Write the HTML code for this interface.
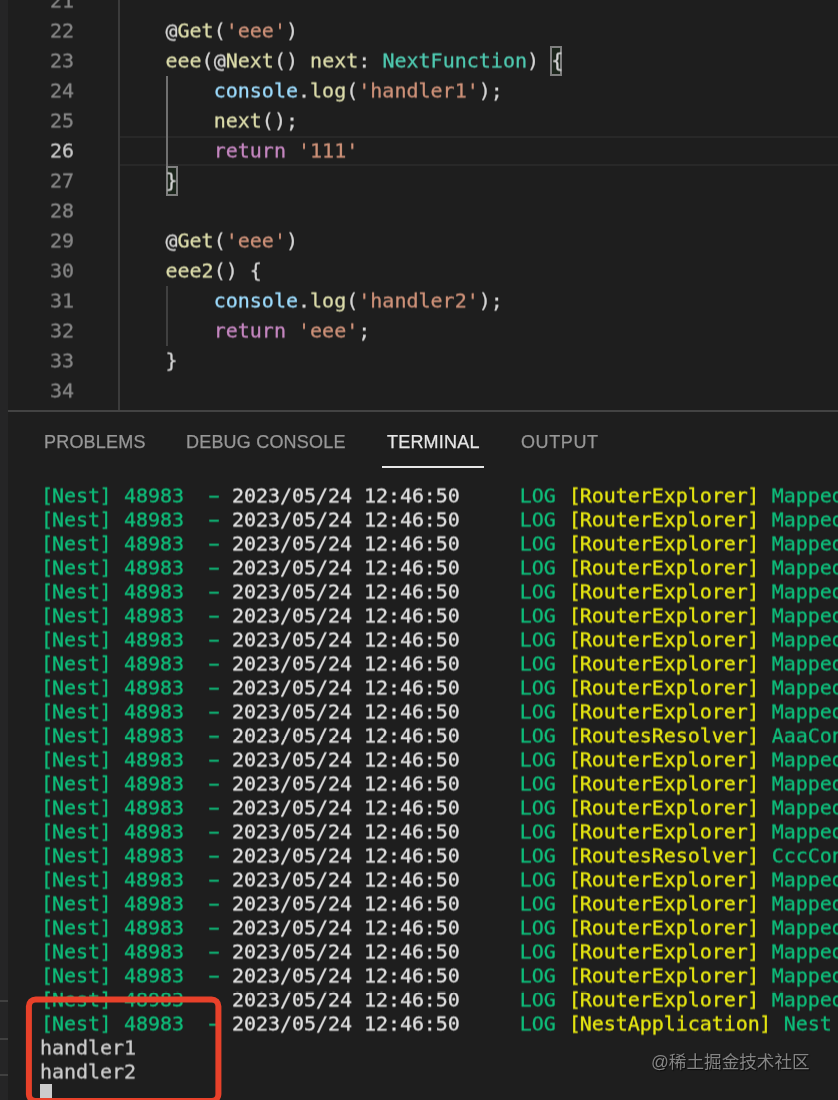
<!DOCTYPE html>
<html lang="zh">
<head>
<meta charset="utf-8">
<title>VS Code</title>
<style>
html,body{margin:0;padding:0;}
.n,.c,#term,#tabs div,#wm{will-change:transform;}
.n,.c,#term{-webkit-text-stroke:0.3px currentColor;}
body{width:838px;height:1100px;overflow:hidden;background:#1e1e1e;position:relative;font-family:"DejaVu Sans Mono","Liberation Mono",monospace;}
#side{position:absolute;left:0;top:0;width:8px;height:1100px;background:#252526;}
#side i{position:absolute;left:0;width:8px;height:2px;background:#404040;}
#gl{position:absolute;left:118px;top:0;width:2px;height:410px;background:#3b3b3b;}
#hb{position:absolute;left:8px;top:410px;width:830px;height:2px;background:#434343;}
.n{position:absolute;left:30px;width:44px;text-align:right;font-size:20px;line-height:30px;height:30px;color:#858585;}
.n.cur{color:#c6c6c6;}
#term,.n,.c{transform:translateY(-0.5px) rotate(0.0001deg);transform-origin:0 0;}
.c{position:absolute;left:69px;letter-spacing:0.01px;white-space:pre;font-size:20px;line-height:30px;height:30px;color:#d4d4d4;}
.f{color:#dcdcaa} .s{color:#ce9178} .v{color:#9cdcfe} .k{color:#c586c0} .t{color:#4ec9b0} .w2{color:#d4d4d4}
.bmb{position:absolute;width:12px;height:30px;box-sizing:border-box;border:2px solid #7f7f7f;background:#1b251b;}
#cl{position:absolute;left:120px;top:136px;width:718px;height:30px;box-sizing:border-box;border-top:2px solid #282828;border-bottom:2px solid #282828;}
.ig{position:absolute;width:2px;}
#tabs div{position:absolute;top:430px;font-family:"Liberation Sans",sans-serif;font-size:18px;line-height:24px;color:#979797;white-space:nowrap;letter-spacing:0.2px;-webkit-text-stroke:0.25px currentColor;}
#tabs #ul{top:466px;left:382px;width:102px;height:2px;background:#e7e7e7;}
#term{position:absolute;left:39.5px;top:484px;font-size:20px;color:#cccccc;letter-spacing:-0.046px;}
.r{height:24px;line-height:24px;white-space:pre;}
.lb,.rb{font-weight:normal;position:relative;left:1px;}
.rb{left:-0.5px;}
.d{display:inline-block;transform:scaleX(1.75);}
.g{color:#0dbc79} .w{color:#e0e0e0} .y{color:#e5e510}
#cur{position:absolute;left:40px;top:1084px;width:12px;height:16px;background:#cccccc;}
#red{position:absolute;left:0;top:0;}
#wm{position:absolute;left:651px;top:1050px;font-family:"Liberation Sans","Noto Sans CJK SC",sans-serif;font-size:17.6px;line-height:24px;color:#848484;white-space:nowrap;text-shadow:1px 1px 1px rgba(0,0,0,0.7);}
</style>
</head>
<body>
<div id="side"><i style="top:1000px"></i><i style="top:1038px"></i><i style="top:1074px"></i></div>
<div id="gl"></div>
<div id="cl"></div>
<div class="bmb" style="left:550px;top:46px"></div>
<div class="bmb" style="left:166px;top:166px"></div>
<div class="ig" style="left:166px;top:76px;height:90px;background:#707070"></div>
<div class="ig" style="left:166px;top:286px;height:60px;background:#404040"></div>
<div class="n" style="top:-14px">21</div>
<div class="n" style="top:16px">22</div>
<div class="n" style="top:46px">23</div>
<div class="n" style="top:76px">24</div>
<div class="n" style="top:106px">25</div>
<div class="n cur" style="top:136px">26</div>
<div class="n" style="top:166px">27</div>
<div class="n" style="top:196px">28</div>
<div class="n" style="top:226px">29</div>
<div class="n" style="top:256px">30</div>
<div class="n" style="top:286px">31</div>
<div class="n" style="top:316px">32</div>
<div class="n" style="top:346px">33</div>
<div class="n" style="top:376px">34</div>
<div class="c" style="top:-14px"></div>
<div class="c" style="top:16px">        <span class="w2">@</span><span class="f">Get</span>(<span class="s">'eee'</span>)</div>
<div class="c" style="top:46px">        <span class="f">eee</span>(<span class="w2">@</span><span class="f">Next</span>() <span class="f">next</span>: <span class="t">NextFunction</span>) {</div>
<div class="c" style="top:76px">            <span class="v">console</span>.<span class="f">log</span>(<span class="s">'handler1'</span>);</div>
<div class="c" style="top:106px">            <span class="f">next</span>();</div>
<div class="c" style="top:136px">            <span class="k">return</span> <span class="s">'111'</span></div>
<div class="c" style="top:166px">        }</div>
<div class="c" style="top:196px"></div>
<div class="c" style="top:226px">        <span class="w2">@</span><span class="f">Get</span>(<span class="s">'eee'</span>)</div>
<div class="c" style="top:256px">        <span class="f">eee2</span>() {</div>
<div class="c" style="top:286px">            <span class="v">console</span>.<span class="f">log</span>(<span class="s">'handler2'</span>);</div>
<div class="c" style="top:316px">            <span class="k">return</span> <span class="s">'eee'</span>;</div>
<div class="c" style="top:346px">        }</div>
<div class="c" style="top:376px"></div>
<div id="hb"></div>
<div id="tabs">
<div style="left:44px">PROBLEMS</div>
<div style="left:186px">DEBUG CONSOLE</div>
<div style="left:387px;color:#e7e7e7">TERMINAL</div>
<div style="left:520.5px;letter-spacing:0.6px">OUTPUT</div>
<div id="ul"></div>
</div>
<div id="term">
<div class="r"><span class="g"><b class="lb">[</b>Nest<b class="rb">]</b> 48983  <span class="d">-</span> </span><span class="w">2023/05/24 12:46:50</span><span class="g">     LOG </span><span class="y"><b class="lb">[</b>RouterExplorer<b class="rb">]</b></span><span class="g"> Mapped {/aaa, GET} route +0ms</span></div>
<div class="r"><span class="g"><b class="lb">[</b>Nest<b class="rb">]</b> 48983  <span class="d">-</span> </span><span class="w">2023/05/24 12:46:50</span><span class="g">     LOG </span><span class="y"><b class="lb">[</b>RouterExplorer<b class="rb">]</b></span><span class="g"> Mapped {/aaa, GET} route +0ms</span></div>
<div class="r"><span class="g"><b class="lb">[</b>Nest<b class="rb">]</b> 48983  <span class="d">-</span> </span><span class="w">2023/05/24 12:46:50</span><span class="g">     LOG </span><span class="y"><b class="lb">[</b>RouterExplorer<b class="rb">]</b></span><span class="g"> Mapped {/aaa, GET} route +0ms</span></div>
<div class="r"><span class="g"><b class="lb">[</b>Nest<b class="rb">]</b> 48983  <span class="d">-</span> </span><span class="w">2023/05/24 12:46:50</span><span class="g">     LOG </span><span class="y"><b class="lb">[</b>RouterExplorer<b class="rb">]</b></span><span class="g"> Mapped {/aaa, GET} route +0ms</span></div>
<div class="r"><span class="g"><b class="lb">[</b>Nest<b class="rb">]</b> 48983  <span class="d">-</span> </span><span class="w">2023/05/24 12:46:50</span><span class="g">     LOG </span><span class="y"><b class="lb">[</b>RouterExplorer<b class="rb">]</b></span><span class="g"> Mapped {/aaa, GET} route +0ms</span></div>
<div class="r"><span class="g"><b class="lb">[</b>Nest<b class="rb">]</b> 48983  <span class="d">-</span> </span><span class="w">2023/05/24 12:46:50</span><span class="g">     LOG </span><span class="y"><b class="lb">[</b>RouterExplorer<b class="rb">]</b></span><span class="g"> Mapped {/aaa, GET} route +0ms</span></div>
<div class="r"><span class="g"><b class="lb">[</b>Nest<b class="rb">]</b> 48983  <span class="d">-</span> </span><span class="w">2023/05/24 12:46:50</span><span class="g">     LOG </span><span class="y"><b class="lb">[</b>RouterExplorer<b class="rb">]</b></span><span class="g"> Mapped {/aaa, GET} route +0ms</span></div>
<div class="r"><span class="g"><b class="lb">[</b>Nest<b class="rb">]</b> 48983  <span class="d">-</span> </span><span class="w">2023/05/24 12:46:50</span><span class="g">     LOG </span><span class="y"><b class="lb">[</b>RouterExplorer<b class="rb">]</b></span><span class="g"> Mapped {/aaa, GET} route +0ms</span></div>
<div class="r"><span class="g"><b class="lb">[</b>Nest<b class="rb">]</b> 48983  <span class="d">-</span> </span><span class="w">2023/05/24 12:46:50</span><span class="g">     LOG </span><span class="y"><b class="lb">[</b>RouterExplorer<b class="rb">]</b></span><span class="g"> Mapped {/aaa, GET} route +0ms</span></div>
<div class="r"><span class="g"><b class="lb">[</b>Nest<b class="rb">]</b> 48983  <span class="d">-</span> </span><span class="w">2023/05/24 12:46:50</span><span class="g">     LOG </span><span class="y"><b class="lb">[</b>RouterExplorer<b class="rb">]</b></span><span class="g"> Mapped {/aaa, GET} route +0ms</span></div>
<div class="r"><span class="g"><b class="lb">[</b>Nest<b class="rb">]</b> 48983  <span class="d">-</span> </span><span class="w">2023/05/24 12:46:50</span><span class="g">     LOG </span><span class="y"><b class="lb">[</b>RoutesResolver<b class="rb">]</b></span><span class="g"> AaaController {/aaa}: +0ms</span></div>
<div class="r"><span class="g"><b class="lb">[</b>Nest<b class="rb">]</b> 48983  <span class="d">-</span> </span><span class="w">2023/05/24 12:46:50</span><span class="g">     LOG </span><span class="y"><b class="lb">[</b>RouterExplorer<b class="rb">]</b></span><span class="g"> Mapped {/bbb, GET} route +0ms</span></div>
<div class="r"><span class="g"><b class="lb">[</b>Nest<b class="rb">]</b> 48983  <span class="d">-</span> </span><span class="w">2023/05/24 12:46:50</span><span class="g">     LOG </span><span class="y"><b class="lb">[</b>RouterExplorer<b class="rb">]</b></span><span class="g"> Mapped {/bbb, GET} route +0ms</span></div>
<div class="r"><span class="g"><b class="lb">[</b>Nest<b class="rb">]</b> 48983  <span class="d">-</span> </span><span class="w">2023/05/24 12:46:50</span><span class="g">     LOG </span><span class="y"><b class="lb">[</b>RouterExplorer<b class="rb">]</b></span><span class="g"> Mapped {/bbb, GET} route +0ms</span></div>
<div class="r"><span class="g"><b class="lb">[</b>Nest<b class="rb">]</b> 48983  <span class="d">-</span> </span><span class="w">2023/05/24 12:46:50</span><span class="g">     LOG </span><span class="y"><b class="lb">[</b>RouterExplorer<b class="rb">]</b></span><span class="g"> Mapped {/bbb, GET} route +0ms</span></div>
<div class="r"><span class="g"><b class="lb">[</b>Nest<b class="rb">]</b> 48983  <span class="d">-</span> </span><span class="w">2023/05/24 12:46:50</span><span class="g">     LOG </span><span class="y"><b class="lb">[</b>RoutesResolver<b class="rb">]</b></span><span class="g"> CccController {/ccc}: +0ms</span></div>
<div class="r"><span class="g"><b class="lb">[</b>Nest<b class="rb">]</b> 48983  <span class="d">-</span> </span><span class="w">2023/05/24 12:46:50</span><span class="g">     LOG </span><span class="y"><b class="lb">[</b>RouterExplorer<b class="rb">]</b></span><span class="g"> Mapped {/ccc, GET} route +0ms</span></div>
<div class="r"><span class="g"><b class="lb">[</b>Nest<b class="rb">]</b> 48983  <span class="d">-</span> </span><span class="w">2023/05/24 12:46:50</span><span class="g">     LOG </span><span class="y"><b class="lb">[</b>RouterExplorer<b class="rb">]</b></span><span class="g"> Mapped {/ccc, GET} route +0ms</span></div>
<div class="r"><span class="g"><b class="lb">[</b>Nest<b class="rb">]</b> 48983  <span class="d">-</span> </span><span class="w">2023/05/24 12:46:50</span><span class="g">     LOG </span><span class="y"><b class="lb">[</b>RouterExplorer<b class="rb">]</b></span><span class="g"> Mapped {/ccc, GET} route +0ms</span></div>
<div class="r"><span class="g"><b class="lb">[</b>Nest<b class="rb">]</b> 48983  <span class="d">-</span> </span><span class="w">2023/05/24 12:46:50</span><span class="g">     LOG </span><span class="y"><b class="lb">[</b>RouterExplorer<b class="rb">]</b></span><span class="g"> Mapped {/ccc, GET} route +0ms</span></div>
<div class="r"><span class="g"><b class="lb">[</b>Nest<b class="rb">]</b> 48983  <span class="d">-</span> </span><span class="w">2023/05/24 12:46:50</span><span class="g">     LOG </span><span class="y"><b class="lb">[</b>RouterExplorer<b class="rb">]</b></span><span class="g"> Mapped {/ccc, GET} route +0ms</span></div>
<div class="r"><span class="g"><b class="lb">[</b>Nest<b class="rb">]</b> 48983  <span class="d">-</span> </span><span class="w">2023/05/24 12:46:50</span><span class="g">     LOG </span><span class="y"><b class="lb">[</b>RouterExplorer<b class="rb">]</b></span><span class="g"> Mapped {/ccc, GET} route +0ms</span></div>
<div class="r"><span class="g"><b class="lb">[</b>Nest<b class="rb">]</b> 48983  <span class="d">-</span> </span><span class="w">2023/05/24 12:46:50</span><span class="g">     LOG </span><span class="y"><b class="lb">[</b>NestApplication<b class="rb">]</b></span><span class="g"> Nest application successfully started +2ms</span></div>
<div class="r">handler1</div>
<div class="r">handler2</div>
</div>
<div id="cur"></div>
<svg id="red" width="838" height="1100" viewBox="0 0 838 1100"><rect x="28.9" y="999.5" width="189.5" height="101.5" rx="6.8" ry="6.8" fill="none" stroke="#e8412a" stroke-width="6"/></svg>
<div id="wm">@稀土掘金技术社区</div>
</body>
</html>
